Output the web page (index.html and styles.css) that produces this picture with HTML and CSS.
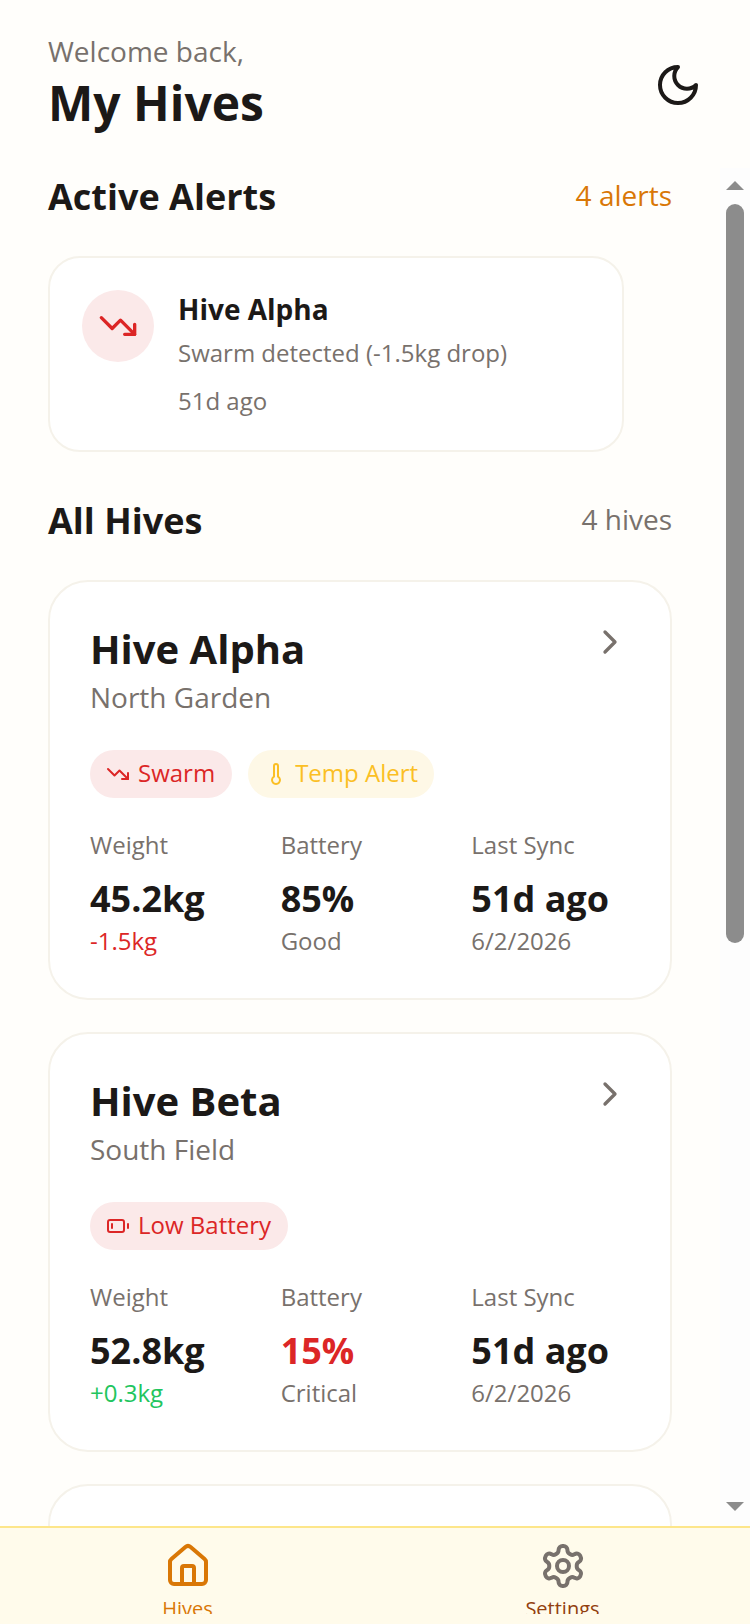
FILE: index.html
```html
<!DOCTYPE html>
<html lang="en">
<head>
<meta charset="utf-8">
<title>My Hives</title>
<link rel="stylesheet" href="styles.css">
</head>
<body>
<div class="app">
  <header class="top">
    <div>
      <p class="welcome">Welcome back,</p>
      <h1 class="title">My Hives</h1>
    </div>
    <svg class="ico moon" viewBox="0 0 24 24"><path d="M12 3a6 6 0 0 0 9 9 9 9 0 1 1-9-9Z"/></svg>
  </header>
  <div class="body">
    <main class="content">
      <section class="sec-head alerts-head">
        <h2>Active Alerts</h2><span class="count orange">4 alerts</span>
      </section>
      <article class="alert">
        <div class="alert-ico">
          <svg class="ico" viewBox="0 0 24 24"><polyline points="22 17 13.5 8.5 8.5 13.5 2 7"/><polyline points="16 17 22 17 22 11"/></svg>
        </div>
        <div>
          <h3>Hive Alpha</h3>
          <p class="alert-msg">Swarm detected (-1.5kg drop)</p>
          <p class="alert-time">51d ago</p>
        </div>
      </article>
      <section class="sec-head hives-head">
        <h2>All Hives</h2><span class="count">4 hives</span>
      </section>
      <article class="card">
        <div class="card-top">
          <div><h3 class="name">Hive Alpha</h3><p class="loc">North Garden</p></div>
          <svg class="ico chev" viewBox="0 0 24 24"><path d="m9 18 6-6-6-6"/></svg>
        </div>
        <div class="tags">
          <span class="tag red"><svg class="ico" viewBox="0 0 24 24"><polyline points="22 17 13.5 8.5 8.5 13.5 2 7"/><polyline points="16 17 22 17 22 11"/></svg>Swarm</span>
          <span class="tag yellow"><svg class="ico" viewBox="0 0 24 24"><path d="M14 4v10.54a4 4 0 1 1-4 0V4a2 2 0 0 1 4 0Z"/></svg>Temp Alert</span>
        </div>
        <div class="stats">
          <div><p class="lab">Weight</p><p class="val">45.2kg</p><p class="sub tred">-1.5kg</p></div>
          <div><p class="lab">Battery</p><p class="val">85%</p><p class="sub">Good</p></div>
          <div><p class="lab">Last Sync</p><p class="val">51d ago</p><p class="sub">6/2/2026</p></div>
        </div>
      </article>
      <article class="card">
        <div class="card-top">
          <div><h3 class="name">Hive Beta</h3><p class="loc">South Field</p></div>
          <svg class="ico chev" viewBox="0 0 24 24"><path d="m9 18 6-6-6-6"/></svg>
        </div>
        <div class="tags">
          <span class="tag red"><svg class="ico" viewBox="0 0 24 24"><rect x="2" y="6" width="16" height="12" rx="2"/><path d="M22 14v-4"/><path d="M6 14v-4"/></svg>Low Battery</span>
        </div>
        <div class="stats">
          <div><p class="lab">Weight</p><p class="val">52.8kg</p><p class="sub tgreen">+0.3kg</p></div>
          <div><p class="lab">Battery</p><p class="val tred">15%</p><p class="sub">Critical</p></div>
          <div><p class="lab">Last Sync</p><p class="val">51d ago</p><p class="sub">6/2/2026</p></div>
        </div>
      </article>
      <article class="card"></article>
    </main>
    <aside class="scrollbar">
      <span class="arrow up"></span>
      <span class="thumb"></span>
      <span class="arrow down"></span>
    </aside>
  </div>
  <nav class="nav">
    <div class="nav-item active">
      <svg class="ico" viewBox="0 0 24 24"><path d="M15 21v-8a1 1 0 0 0-1-1h-4a1 1 0 0 0-1 1v8"/><path d="M3 10a2 2 0 0 1 .709-1.528l7-5.999a2 2 0 0 1 2.582 0l7 5.999A2 2 0 0 1 21 10v9a2 2 0 0 1-2 2H5a2 2 0 0 1-2-2z"/></svg>
      <span>Hives</span>
    </div>
    <div class="nav-item">
      <svg class="ico" viewBox="0 0 24 24"><path d="M12.22 2h-.44a2 2 0 0 0-2 2v.18a2 2 0 0 1-1 1.73l-.43.25a2 2 0 0 1-2 0l-.15-.08a2 2 0 0 0-2.73.73l-.22.38a2 2 0 0 0 .73 2.73l.15.1a2 2 0 0 1 1 1.72v.51a2 2 0 0 1-1 1.74l-.15.09a2 2 0 0 0-.73 2.73l.22.38a2 2 0 0 0 2.73.73l.15-.08a2 2 0 0 1 2 0l.43.25a2 2 0 0 1 1 1.73V20a2 2 0 0 0 2 2h.44a2 2 0 0 0 2-2v-.18a2 2 0 0 1 1-1.73l.43-.25a2 2 0 0 1 2 0l.15.08a2 2 0 0 0 2.73-.73l.22-.39a2 2 0 0 0-.73-2.73l-.15-.08a2 2 0 0 1-1-1.74v-.5a2 2 0 0 1 1-1.74l.15-.09a2 2 0 0 0 .73-2.73l-.22-.38a2 2 0 0 0-2.73-.73l-.15.08a2 2 0 0 1-2 0l-.43-.25a2 2 0 0 1-1-1.73V4a2 2 0 0 0-2-2z"/><circle cx="12" cy="12" r="3"/></svg>
      <span>Settings</span>
    </div>
  </nav>
</div>
</body>
</html>
```
FILE: styles.css
```css
* { box-sizing: border-box; }
html, body { margin: 0; padding: 0; }
body { font-family: "Open Sans", sans-serif; color: #1c1917; background: #fffefb; }
p, h1, h2, h3 { margin: 0; }
.app { width: 750px; height: 1624px; display: flex; flex-direction: column; overflow: hidden; }
.ico { fill: none; stroke: currentColor; stroke-width: 2; stroke-linecap: round; stroke-linejoin: round; flex: none; }

.top { height: 168px; flex: none; padding: 31px 48px 0; display: flex; justify-content: space-between; align-items: flex-start; }
.welcome { font-size: 28px; line-height: 40px; color: #78716c; }
.title { font-size: 48px; line-height: 64px; font-weight: 700; }
.moon { width: 48px; height: 48px; margin: 30px 0 0 0; color: #1c1917; }

.body { flex: 1; min-height: 0; display: flex; overflow: hidden; }
.content { flex: 1; min-width: 0; padding: 0 48px; overflow: hidden; }
.sec-head { display: flex; justify-content: space-between; align-items: center; }
.sec-head h2 { font-size: 36px; line-height: 46px; font-weight: 700; }
.count { font-size: 28px; line-height: 40px; padding-bottom: 4px; color: #78716c; }
.orange { color: #d97706; }
.alerts-head { margin-top: 5px; height: 47px; }
.hives-head { margin-top: 46px; }

.alert { width: 576px; height: 196px; margin-top: 36px; padding: 32px; border: 2px solid #f5f2ea; border-radius: 32px; background: #fff; display: flex; gap: 24px; }
.alert-ico { width: 72px; height: 72px; border-radius: 50%; background: #fbe9e9; color: #dc2626; display: flex; align-items: center; justify-content: center; flex: none; }
.alert-ico .ico { width: 40px; height: 40px; }
.alert h3 { font-size: 28px; line-height: 38px; font-weight: 700; }
.alert-msg { font-size: 24px; line-height: 36px; margin-top: 7px; color: #78716c; }
.alert-time { font-size: 24px; line-height: 36px; margin-top: 12px; color: #78716c; }

.card { height: 420px; margin-top: 32px; padding: 39px 40px 40px; border: 2px solid #f5f2ea; border-radius: 40px; background: #fff; }
.hives-head + .card { margin-top: 36px; }
.card-top { display: flex; justify-content: space-between; align-items: flex-start; }
.name { font-size: 40px; line-height: 56px; font-weight: 700; }
.loc { font-size: 28px; line-height: 38px; margin-top: 1px; color: #78716c; }
.chev { width: 40px; height: 40px; margin-top: 1px; color: #78716c; }
.tags { display: flex; gap: 16px; margin-top: 34px; }
.tag { height: 48px; padding: 0 17px 4px 16px; border-radius: 24px; display: flex; align-items: center; gap: 8px; font-size: 24px; }
.tag .ico { width: 24px; height: 24px; margin-top: 4px; }
.red { background: #fbe9e9; color: #dc2626; }
.yellow { background: #fef8e6; color: #fbbf24; gap: 7px; padding-right: 16px; }
.stats { display: grid; grid-template-columns: repeat(3, 1fr); gap: 32px; margin-top: 29px; }
.lab { font-size: 24px; line-height: 36px; color: #78716c; }
.val { font-size: 36px; line-height: 50px; font-weight: 700; margin-top: 11px; }
.sub { font-size: 24px; line-height: 32px; margin-top: 1px; color: #78716c; }
.tred { color: #dc2626; }
.tgreen { color: #22c55e; }

.scrollbar { width: 30px; flex: none; background: #fdfdfd; display: flex; flex-direction: column; align-items: center; padding: 13px 0 0; position: relative; }
.arrow { width: 0; height: 0; border-left: 9px solid transparent; border-right: 9px solid transparent; flex: none; }
.up { border-bottom: 9px solid #8c8c8c; }
.down { border-top: 9px solid #8c8c8c; margin-top: 559px; }
.thumb { width: 18px; height: 739px; margin-top: 14px; border-radius: 9px; background: #8c8c8c; flex: none; }

.nav { height: 98px; flex: none; background: #fffbeb; border-top: 2px solid #fde68a; display: flex; overflow: hidden; }
.nav-item { flex: 1; display: flex; flex-direction: column; align-items: center; padding-top: 14px; color: #92400e; font-size: 20px; line-height: 28px; }
.nav-item .ico { width: 48px; height: 48px; color: #78716c; }
.nav-item span { margin-top: 5px; display: block; height: 19px; overflow: hidden; }
.active { color: #d97706; }
.active .ico { color: #d97706; }
```
